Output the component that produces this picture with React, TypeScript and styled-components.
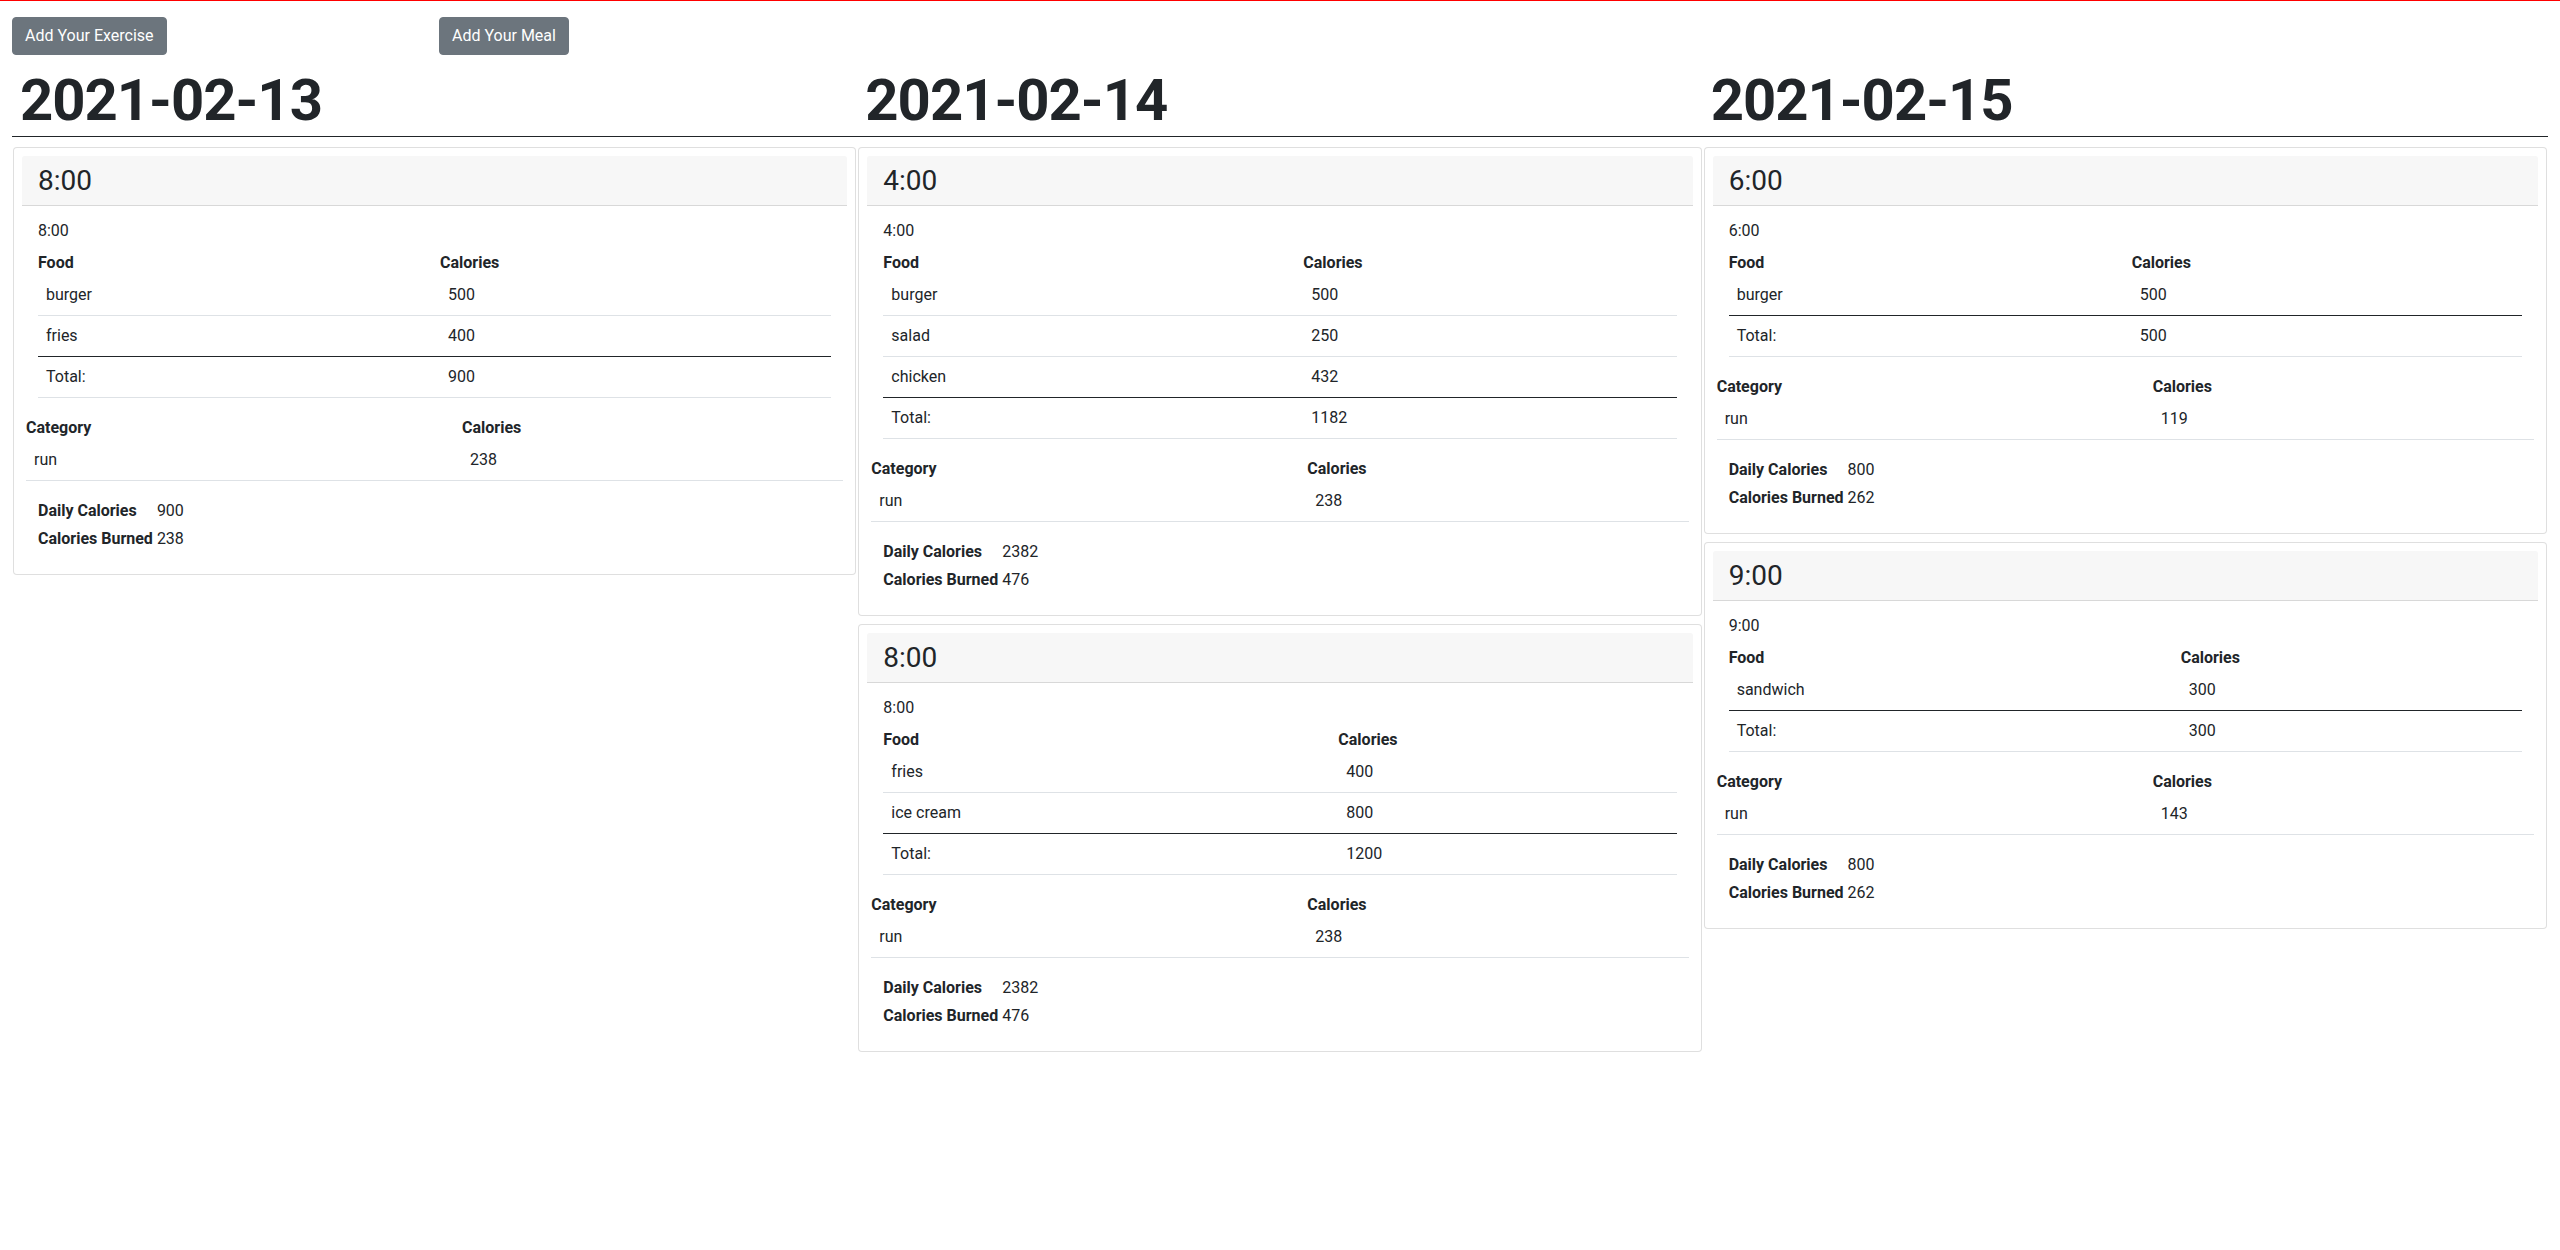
import React from 'react';
import styled, { createGlobalStyle } from 'styled-components';

const GlobalStyle = createGlobalStyle`
  html, body { margin: 0; padding: 0; background: #ffffff; }
  body {
    border-top: 1px solid #ff0000;
    font-family: Roboto, "Liberation Sans", Arial, sans-serif;
    font-size: 16px;
    line-height: 1.5;
    color: #212529;
  }
  *, *::before, *::after { box-sizing: border-box; }
`;

type Food = { name: string; cal: number };
type Meal = {
  time: string;
  foods: Food[];
  exercises: Food[];
  daily: number;
  burned: number;
  split: number;
};
type Day = { date: string; meals: Meal[] };

const days: Day[] = [
  {
    date: '2021-02-13',
    meals: [
      {
        time: '8:00',
        foods: [
          { name: 'burger', cal: 500 },
          { name: 'fries', cal: 400 },
        ],
        exercises: [{ name: 'run', cal: 238 }],
        daily: 900,
        burned: 238,
        split: 402,
      },
    ],
  },
  {
    date: '2021-02-14',
    meals: [
      {
        time: '4:00',
        foods: [
          { name: 'burger', cal: 500 },
          { name: 'salad', cal: 250 },
          { name: 'chicken', cal: 432 },
        ],
        exercises: [{ name: 'run', cal: 238 }],
        daily: 2382,
        burned: 476,
        split: 420,
      },
      {
        time: '8:00',
        foods: [
          { name: 'fries', cal: 400 },
          { name: 'ice cream', cal: 800 },
        ],
        exercises: [{ name: 'run', cal: 238 }],
        daily: 2382,
        burned: 476,
        split: 455,
      },
    ],
  },
  {
    date: '2021-02-15',
    meals: [
      {
        time: '6:00',
        foods: [{ name: 'burger', cal: 500 }],
        exercises: [{ name: 'run', cal: 119 }],
        daily: 800,
        burned: 262,
        split: 403,
      },
      {
        time: '9:00',
        foods: [{ name: 'sandwich', cal: 300 }],
        exercises: [{ name: 'run', cal: 143 }],
        daily: 800,
        burned: 262,
        split: 452,
      },
    ],
  },
];

const Page = styled.div`
  padding: 16px 12px 40px;
`;

const Toolbar = styled.div`
  display: grid;
  grid-template-columns: 427px auto;
  justify-content: start;
  align-items: start;
`;

const Button = styled.button`
  font-family: inherit;
  font-size: 16px;
  line-height: 24px;
  font-weight: 400;
  color: #ffffff;
  background: #6c757d;
  border: 1px solid #6c757d;
  border-radius: 4px;
  padding: 6px 12px;
  cursor: pointer;
  justify-self: start;
`;

const Days = styled.div`
  display: grid;
  grid-template-columns: repeat(3, 1fr);
  align-items: start;
  margin-top: 10px;
`;

const DayColumn = styled.section`
  display: flex;
  flex-direction: column;
  min-width: 0;
`;

const DayTitle = styled.h1`
  margin: 0;
  padding: 0 0 1px 8px;
  font-size: 58px;
  line-height: 70px;
  letter-spacing: -1px;
  font-weight: 700;
  color: #212529;
  border-bottom: 1px solid #212529;
`;

const CardStack = styled.div`
  display: flex;
  flex-direction: column;
  gap: 8px;
  padding: 10px 1px 0;
`;

const Card = styled.article`
  border: 1px solid rgba(0, 0, 0, 0.125);
  border-radius: 4px;
  padding: 8px;
  background: #ffffff;
`;

const CardHeader = styled.div`
  background: #f7f7f7;
  border-bottom: 1px solid rgba(0, 0, 0, 0.125);
  border-radius: 3px 3px 0 0;
  padding: 8px 16px;
  font-size: 28px;
  line-height: 33px;
  font-weight: 400;
`;

const CardBody = styled.div`
  padding: 13px 0 12px;
`;

const TimeLabel = styled.div`
  margin: 0 16px 8px;
`;

const DataTable = styled.div<{ $inset: number; $top?: number }>`
  margin: ${(p) => p.$top ?? 0}px ${(p) => p.$inset}px 0;
`;

const HeadRow = styled.div<{ $split: number }>`
  display: grid;
  grid-template-columns: ${(p) => p.$split}px 1fr;
`;

const HeadCell = styled.div`
  font-weight: 700;
  line-height: 24px;
`;

const Row = styled.div<{ $split: number; $strong?: boolean }>`
  display: grid;
  grid-template-columns: ${(p) => p.$split}px 1fr;
  border-bottom: 1px solid ${(p) => (p.$strong ? '#212529' : '#dee2e6')};
`;

const Cell = styled.div`
  padding: 8px;
  line-height: 24px;
`;

const Summary = styled.table`
  margin: 15px 0 0 13px;
  border-spacing: 2px;
  border-collapse: separate;
`;

const SummaryLabel = styled.th`
  padding: 1px;
  text-align: left;
  font-weight: 700;
  line-height: 24px;
`;

const SummaryValue = styled.td`
  padding: 1px;
  line-height: 24px;
`;

const MealCard = ({ meal }: { meal: Meal }) => {
  const total = meal.foods.reduce((s, f) => s + f.cal, 0);
  return (
    <Card>
      <CardHeader>{meal.time}</CardHeader>
      <CardBody>
        <TimeLabel>{meal.time}</TimeLabel>
        <DataTable $inset={16}>
          <HeadRow $split={meal.split}>
            <HeadCell>Food</HeadCell>
            <HeadCell>Calories</HeadCell>
          </HeadRow>
          {meal.foods.map((f, i) => (
            <Row key={f.name} $split={meal.split} $strong={i === meal.foods.length - 1}>
              <Cell>{f.name}</Cell>
              <Cell>{f.cal}</Cell>
            </Row>
          ))}
          <Row $split={meal.split}>
            <Cell>Total:</Cell>
            <Cell>{total}</Cell>
          </Row>
        </DataTable>
        <DataTable $inset={4} $top={18}>
          <HeadRow $split={436}>
            <HeadCell>Category</HeadCell>
            <HeadCell>Calories</HeadCell>
          </HeadRow>
          {meal.exercises.map((e) => (
            <Row key={e.name} $split={436}>
              <Cell>{e.name}</Cell>
              <Cell>{e.cal}</Cell>
            </Row>
          ))}
        </DataTable>
        <Summary>
          <tbody>
            <tr>
              <SummaryLabel>Daily Calories</SummaryLabel>
              <SummaryValue>{meal.daily}</SummaryValue>
            </tr>
            <tr>
              <SummaryLabel>Calories Burned</SummaryLabel>
              <SummaryValue>{meal.burned}</SummaryValue>
            </tr>
          </tbody>
        </Summary>
      </CardBody>
    </Card>
  );
};

export default function App() {
  return (
    <>
      <GlobalStyle />
      <Page>
        <Toolbar>
          <Button>Add Your Exercise</Button>
          <Button>Add Your Meal</Button>
        </Toolbar>
        <Days>
          {days.map((d) => (
            <DayColumn key={d.date}>
              <DayTitle>{d.date}</DayTitle>
              <CardStack>
                {d.meals.map((m, i) => (
                  <MealCard key={i} meal={m} />
                ))}
              </CardStack>
            </DayColumn>
          ))}
        </Days>
      </Page>
    </>
  );
}
